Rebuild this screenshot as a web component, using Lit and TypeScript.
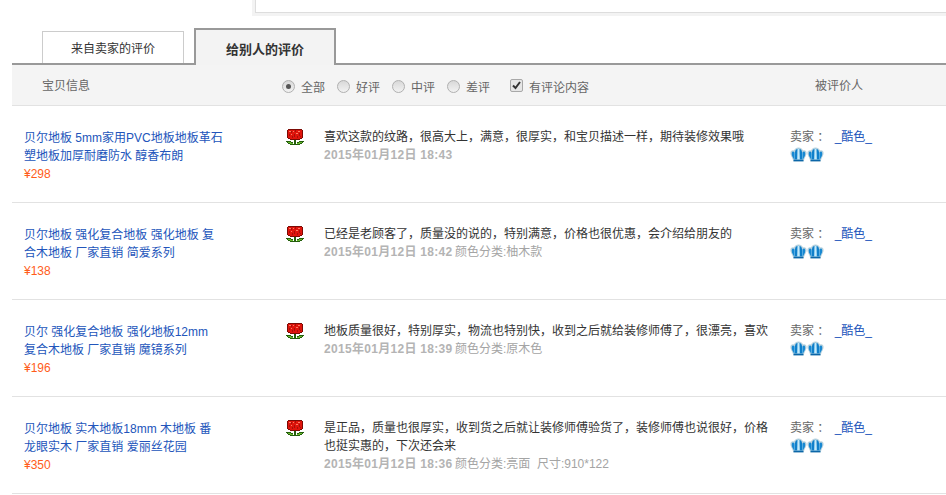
import { LitElement, html, css, svg } from "lit";
import { customElement } from "lit/decorators.js";

const rows = [
  { t: ["贝尔地板 5mm家用PVC地板地板革石", "塑地板加厚耐磨防水 醇香布朗"], p: "298", c: ["喜欢这款的纹路，很高大上，满意，很厚实，和宝贝描述一样，期待装修效果哦"], d: "2015年01月12日 18:43", x: "" },
  { t: ["贝尔地板 强化复合地板 强化地板 复", "合木地板 厂家直销 简爱系列"], p: "138", c: ["已经是老顾客了，质量没的说的，特别满意，价格也很优惠，会介绍给朋友的"], d: "2015年01月12日 18:42", x: "颜色分类:柚木款" },
  { t: ["贝尔 强化复合地板 强化地板12mm", "复合木地板 厂家直销 魔镜系列"], p: "196", c: ["地板质量很好，特别厚实，物流也特别快，收到之后就给装修师傅了，很漂亮，喜欢"], d: "2015年01月12日 18:39", x: "颜色分类:原木色" },
  { t: ["贝尔地板 实木地板18mm 木地板 番", "龙眼实木 厂家直销 爱丽丝花园"], p: "350", c: ["是正品，质量也很厚实，收到货之后就让装修师傅验货了，装修师傅也说很好，价格", "也挺实惠的，下次还会来"], d: "2015年01月12日 18:36", x: "颜色分类:亮面\u00a0\u00a0尺寸:910*122" },
];

const rose = html`<svg class="rose" width="18" height="18" viewBox="0 0 18 18" shape-rendering="crispEdges">
  <path fill="#7c0a04" d="M2 1h14v1h1v8h-1v1h-2v1H4v-1H2v-1H1V2h1z"/>
  <path fill="#e0140c" d="M2 2h14v8h-2v1H4v-1H2z"/>
  <path fill="#ff7a60" d="M3 3h2v1H3zM7 3h1v1H7zM12 3h2v1h-2zM5 6h1v1H5zM10 5h2v1h-2z"/>
  <path fill="#a80e08" d="M5 3h1v2H5zM9 2h1v2H9zM3 6h1v2H3zM8 6h1v3H8zM13 5h1v3h-1zM6 8h1v2H6zM11 8h1v2h-1zM14 8h1v1h-1z"/>
  <path fill="#245f0c" d="M8 12h2v5H8zM0 13h5v1h2v2h1v1H4v-1H2v-1H1v-1H0zM18 13h-5v1h-2v2h-1v1h4v-1h2v-1h1v-1h1z"/>
  <path fill="#68b82c" d="M2 14h3v1h2v1H4v-1H2zM13 14h3v1h-2v1h-3v-1h2z"/>
</svg>`;

const crown = svg`<svg class="crown" width="17" height="16" viewBox="0 0 17 16">
  <path fill="#b9d2de" d="M8.500.5C11 .5 12.500 2 13 3.500 14.500 2.600 16.600 3.400 16.600 6c0 2.600-1.600 4-2.400 6.500l-.4 2H3.200l-.4-2C2 10 .4 8.600.4 6 .4 3.400 2.500 2.600 4 3.500 4.500 2 6 .5 8.500.5z"/>
  <path fill="#0f7fca" d="M8.500 1.800C10.500 1.800 11.500 3 12 5l.4 7.500H4.600L5 5C5.500 3 6.500 1.800 8.500 1.800z"/>
  <path fill="#1788d2" d="M3 4.500C4 4.500 4.800 5.500 4.800 7L4.600 12.500H4L3 10.500C2 9 1.600 7.500 1.800 6 2 5 2.500 4.500 3 4.500zM14 4.500C13 4.500 12.200 5.500 12.200 7L12.400 12.500H13L14 10.500C15 9 15.400 7.500 15.200 6 15 5 14.500 4.500 14 4.500z"/>
  <path fill="#c4eafa" d="M7.500 1.800h2l.3 10.700H7.200z"/>
  <path fill="#6cbcec" d="M4.500 6h.6l-.3 6.500h-.5zM12 6h.6l.2 6.500h-.5z"/>
  <path fill="#0b66a8" d="M3.600 12.800h9.800v1.500H3.600z"/>
</svg>`;

@customElement("app-root")
export class AppRoot extends LitElement {
  static styles = css`
    :host { display: block; width: 946px; height: 495px; overflow: hidden; background: #fff;
      font: 12px/18px "Liberation Sans", "Noto Sans CJK SC", sans-serif; color: #333; }
    .top { margin-left: 252px; height: 16px; background: #f3f3f3; padding: 0 0 3px 3px; box-sizing: border-box; }
    .top div { height: 100%; background: #fff; border: solid #ddd; border-width: 0 0 1px 1px; box-sizing: border-box; }
    .tabs { display: flex; align-items: flex-end; margin: 12px 0 0 12px; padding-left: 30px; gap: 10px; height: 35px;
      border-bottom: 2px solid #999; box-sizing: content-box; }
    .tab { box-sizing: border-box; width: 142px; height: 32px; border: 1px solid #ccc; border-bottom: 0; text-align: center;
      line-height: 34px; background: #fff; color: #333; }
    .tab.on { height: 37px; margin-bottom: -2px; border: 2px solid #999; border-bottom: 0; background: #f3f3f3; font-weight: 700;
      font-size: 13px; line-height: 39px; }
    .head { margin-left: 12px; height: 41px; box-sizing: border-box; background: #f4f4f4; border-bottom: 1px solid #e2e2e2;
      display: grid; grid-template-columns: 270px 533px 1fr; color: #666; }
    .h1 { padding: 12px 0 0 30px; }
    .h3 { padding: 12px 0 0 0; }
    .filters { display: flex; padding-top: 14px; }
    .f { display: flex; align-items: flex-start; width: 55px; }
    .f.chk { margin-left: 8px; width: auto; }
    .radio { box-sizing: border-box; width: 13px; height: 13px; margin: 1px 6px 0 0; border-radius: 50%; border: 1px solid #b0b0b0;
      background: linear-gradient(#d8d8d8, #f2f2f2); display: flex; align-items: center; justify-content: center; flex: none; }
    .radio.on::after { content: ""; width: 5px; height: 5px; border-radius: 50%; background: #555; }
    .check { box-sizing: border-box; width: 13px; height: 13px; margin: 0 6px 0 0; border: 1px solid #a8a8a8; border-radius: 2px;
      background: #e6e6e6; flex: none; display: block; }
    .row { margin-left: 12px; height: 97px; box-sizing: border-box; border-bottom: 1px solid #e2e2e2;
      display: grid; grid-template-columns: 274px 38px 466px 1fr; padding-top: 22px; }
    .prod { padding: 1px 0 0 12px; }
    a { color: #2255bb; text-decoration: none; }
    .line { white-space: nowrap; }
    .price { color: #ff5c1a; }
    .rose { display: block; margin-left: 0; }
    .date { color: #a4a4a4; white-space: nowrap; }
    .date b { font-weight: 700; letter-spacing: .3px; color: #b4b4b4; margin-right: -1px; }
    .comment { color: #333; white-space: nowrap; }
    .seller { color: #666; }
    .seller a { margin-left: 2px; }
    .crowns { display: flex; gap: 0; margin-top: 1px; }
    .crown { display: block; }
  `;

  render() {
    return html`
      <div class="top"><div></div></div>
      <div class="tabs">
        <div class="tab">来自卖家的评价</div>
        <div class="tab on">给别人的评价</div>
      </div>
      <div class="head">
        <div class="h1">宝贝信息</div>
        <div class="filters">
          ${["全部", "好评", "中评", "差评"].map((n, i) => html`<div class="f"><span class="radio ${i === 0 ? "on" : ""}"></span>${n}</div>`)}
          <div class="f chk">
            <svg class="check" viewBox="0 0 11 11"><path d="M2 5.500 4.500 8 9 2" fill="none" stroke="#333" stroke-width="2"/></svg>有评论内容
          </div>
        </div>
        <div class="h3">被评价人</div>
      </div>
      ${rows.map((r) => html`
        <div class="row">
          <div class="prod">
            ${r.t.map((l) => html`<div class="line"><a>${l}</a></div>`)}
            <div class="price">¥${r.p}</div>
          </div>
          <div>${rose}</div>
          <div class="comment">
            ${r.c.map((l) => html`<div class="line">${l}</div>`)}
            <div class="date"><b>${r.d}</b> ${r.x}</div>
          </div>
          <div class="seller">
            <div>卖家 ： <a>_酷色_</a></div>
            <div class="crowns">${crown}${crown}</div>
          </div>
        </div>
      `)}
    `;
  }
}
